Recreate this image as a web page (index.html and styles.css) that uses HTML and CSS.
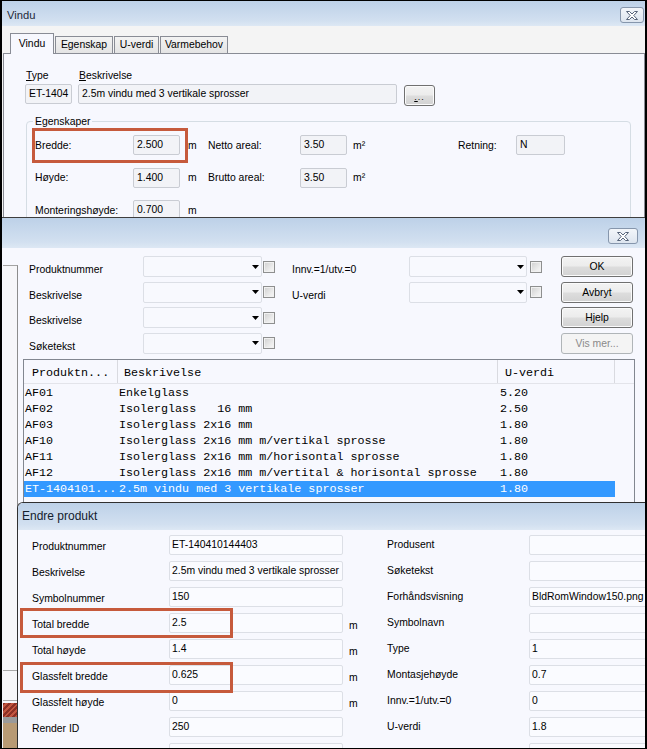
FILE: index.html
```html
<!DOCTYPE html>
<html lang="no">
<head>
<meta charset="utf-8">
<title>Vindu</title>
<link rel="stylesheet" href="styles.css">
</head>
<body>
<div class="screen">

  <section class="win win-vindu">
    <div class="titlebar tb1">
      <span class="title">Vindu</span>
      <span class="close close1"><svg width="12" height="9" viewBox="0 0 12 9"><polygon points="0.5,0.5 3.5,0.5 6,3 8.5,0.5 11.5,0.5 7.8,4.5 11.5,8.5 8.5,8.5 6,6 3.5,8.5 0.5,8.5 4.2,4.5" fill="#fff" stroke="#56647a" stroke-width="1"/></svg></span>
    </div>
    <div class="tabstrip">
      <span class="tab active w-vindu">Vindu</span>
      <span class="tab w-egen">Egenskap</span>
      <span class="tab w-uverdi">U-verdi</span>
      <span class="tab w-varme">Varmebehov</span>
    </div>
    <div class="tabpanel">
      <div class="typegrid">
        <span class="lbl"><u>T</u>ype</span>
        <span class="lbl"><u>B</u>eskrivelse</span>
        <span></span>
        <span class="field">ET-1404</span>
        <span class="field">2.5m vindu med 3 vertikale sprosser</span>
        <span class="btn btn-dots"><u>.</u>..</span>
      </div>
      <fieldset class="group">
        <legend>Egenskaper</legend>
        <div class="propgrid">
          <span>Bredde:</span><span class="field">2.500</span><span class="unit">m</span>
          <span>Netto areal:</span><span class="field">3.50</span><span class="unit2">m²</span>
          <span>Retning:</span><span class="field">N</span>

          <span>Høyde:</span><span class="field">1.400</span><span class="unit">m</span>
          <span>Brutto areal:</span><span class="field">3.50</span><span class="unit2">m²</span>
          <span></span><span></span>

          <span>Monteringshøyde:</span><span class="field">0.700</span><span class="unit">m</span>
        </div>
      </fieldset>
    </div>
  </section>

  <section class="win win-search">
    <div class="titlebar tb2">
      <span class="close close2"><svg width="12" height="9" viewBox="0 0 12 9"><polygon points="0.5,0.5 3.5,0.5 6,3 8.5,0.5 11.5,0.5 7.8,4.5 11.5,8.5 8.5,8.5 6,6 3.5,8.5 0.5,8.5 4.2,4.5" fill="#fff" stroke="#56647a" stroke-width="1"/></svg></span>
    </div>
    <div class="searchbody">
      <div class="searchgrid">
        <span class="slbl c1 r1">Produktnummer</span>
        <span class="combo c2 r1"><svg width="7" height="4" viewBox="0 0 7 4"><polygon points="0,0 7,0 3.5,4" fill="#000"/></svg></span>
        <span class="cb c3 r1"></span>
        <span class="slbl c5 r1">Innv.=1/utv.=0</span>
        <span class="combo c6 r1"><svg width="7" height="4" viewBox="0 0 7 4"><polygon points="0,0 7,0 3.5,4" fill="#000"/></svg></span>
        <span class="cb cb2 c7 r1"></span>
        <span class="btn c9 r1">OK</span>

        <span class="slbl c1 r2">Beskrivelse</span>
        <span class="combo c2 r2"><svg width="7" height="4" viewBox="0 0 7 4"><polygon points="0,0 7,0 3.5,4" fill="#000"/></svg></span>
        <span class="cb c3 r2"></span>
        <span class="slbl c5 r2">U-verdi</span>
        <span class="combo c6 r2"><svg width="7" height="4" viewBox="0 0 7 4"><polygon points="0,0 7,0 3.5,4" fill="#000"/></svg></span>
        <span class="cb cb2 c7 r2"></span>
        <span class="btn c9 r2">Avbryt</span>

        <span class="slbl c1 r3">Beskrivelse</span>
        <span class="combo c2 r3"><svg width="7" height="4" viewBox="0 0 7 4"><polygon points="0,0 7,0 3.5,4" fill="#000"/></svg></span>
        <span class="cb c3 r3"></span>
        <span class="btn c9 r3">Hjelp</span>

        <span class="slbl c1 r4">Søketekst</span>
        <span class="combo c2 r4"><svg width="7" height="4" viewBox="0 0 7 4"><polygon points="0,0 7,0 3.5,4" fill="#000"/></svg></span>
        <span class="cb c3 r4"></span>
        <span class="btn disabled c9 r4">Vis mer...</span>
      </div>

      <div class="list">
        <div class="lhead">
          <span class="h1">Produktn...</span>
          <span class="h2">Beskrivelse</span>
          <span class="h3">U-verdi</span>
        </div>
        <div class="lrows">
          <div class="lrow"><span>AF01</span><span>Enkelglass</span><span>5.20</span></div>
          <div class="lrow"><span>AF02</span><span>Isolerglass   16 mm</span><span>2.50</span></div>
          <div class="lrow"><span>AF03</span><span>Isolerglass 2x16 mm</span><span>1.80</span></div>
          <div class="lrow"><span>AF10</span><span>Isolerglass 2x16 mm m/vertikal sprosse</span><span>1.80</span></div>
          <div class="lrow"><span>AF11</span><span>Isolerglass 2x16 mm m/horisontal sprosse</span><span>1.80</span></div>
          <div class="lrow"><span>AF12</span><span>Isolerglass 2x16 mm m/vertital &amp; horisontal sprosse</span><span>1.80</span></div>
          <div class="lrow selected"><span>ET-1404101...</span><span>2.5m vindu med 3 vertikale sprosser</span><span>1.80</span></div>
        </div>
      </div>
    </div>
  </section>

  <div class="backdrop">
    <div class="bd-a"></div>
    <div class="bd-b"></div>
    <div class="bd-roof"></div>
    <div class="bd-gray"></div>
    <div class="bd-tan"></div>
  </div>

  <section class="win win-edit">
    <div class="titlebar tb3"><span class="title">Endre produkt</span></div>
    <div class="editgrid">
      <span class="elbl">Produktnummer</span><span class="efield">ET-140410144403</span><span></span>
      <span class="rlbl">Produsent</span><span class="efield"></span>

      <span class="elbl">Beskrivelse</span><span class="efield">2.5m vindu med 3 vertikale sprosser</span><span></span>
      <span class="rlbl">Søketekst</span><span class="efield"></span>

      <span class="elbl">Symbolnummer</span><span class="efield">150</span><span></span>
      <span class="rlbl">Forhåndsvisning</span><span class="efield">BldRomWindow150.png</span>

      <span class="elbl">Total bredde</span><span class="efield">2.5</span><span class="eunit">m</span>
      <span class="rlbl">Symbolnavn</span><span class="efield"></span>

      <span class="elbl">Total høyde</span><span class="efield">1.4</span><span class="eunit">m</span>
      <span class="rlbl">Type</span><span class="efield">1</span>

      <span class="elbl">Glassfelt bredde</span><span class="efield">0.625</span><span class="eunit">m</span>
      <span class="rlbl">Montasjehøyde</span><span class="efield">0.7</span>

      <span class="elbl">Glassfelt høyde</span><span class="efield">0</span><span class="eunit">m</span>
      <span class="rlbl">Innv.=1/utv.=0</span><span class="efield">0</span>

      <span class="elbl">Render ID</span><span class="efield">250</span><span></span>
      <span class="rlbl">U-verdi</span><span class="efield">1.8</span>

      <span></span><span class="efield"></span><span></span>
      <span></span><span class="efield"></span>
    </div>
  </section>

  <div class="mark mark1"></div>
  <div class="mark mark2"></div>
  <div class="mark mark3"></div>
</div>
</body>
</html>
```

FILE: styles.css
```css
* { box-sizing: border-box; }

html, body {
  margin: 0;
  padding: 0;
  background: #000;
}

body {
  font-family: "Liberation Sans", Arial, sans-serif;
  font-size: 10.4px;
  color: #000;
}

.screen {
  position: relative;
  width: 643px;
  height: 747px;
  margin: 1px 2px;
  overflow: hidden;
  background: #f4f5fa;
}

.win {
  position: absolute;
  overflow: hidden;
  background: #f7f8fe;
}

/* ---------- title bars ---------- */
.titlebar {
  display: flex;
  justify-content: space-between;
  align-items: flex-start;
  background: linear-gradient(#bdd1e8, #d2e0f0 80%, #dde8f4);
}

.title { white-space: nowrap; }

.close {
  display: flex;
  align-items: center;
  justify-content: center;
  border: 1px solid #8696ac;
  border-radius: 3px;
  background: linear-gradient(#f3f6fa, #dde5ef);
}

/* ---------- window 1 : Vindu ---------- */
.win-vindu {
  left: 0;
  top: 0;
  width: 643px;
  height: 230px;
  background: #f4f4f4;
}

.tb1 { height: 25px; }
.tb1 .title {
  font-size: 11.2px;
  line-height: 13px;
  padding: 8px 0 0 5px;
  color: #1e2a3a;
}
.close1 {
  width: 24px;
  height: 16px;
  margin: 6px 1px 0 0;
}

.tabstrip {
  height: 27px;
  display: flex;
  align-items: flex-end;
  padding-left: 8px;
  background: #f4f4f4;
}

.tab {
  height: 17px;
  margin-right: 1px;
  border: 1px solid #898c95;
  border-bottom: none;
  background: linear-gradient(#f3f3f3, #e4e4e4);
  text-align: center;
  line-height: 16px;
  white-space: nowrap;
}
.tab.active {
  position: relative;
  z-index: 1;
  height: 21px;
  margin-bottom: -1px;
  background: #f7f8fe;
  line-height: 20px;
}
.w-vindu { width: 44px; }
.w-egen { width: 58px; }
.w-uverdi { width: 45px; }
.w-varme { width: 68px; }

.tabpanel {
  margin-left: 1px;
  height: 200px;
  padding: 15px 0 0 21px;
  border: 1px solid #898c95;
  border-bottom: none;
  background: #f7f8fe;
}

.typegrid {
  display: grid;
  grid-template-columns: 47px 319px 32px;
  grid-template-rows: 13px 22px;
  column-gap: 6px;
  row-gap: 2px;
}
.typegrid .lbl {
  line-height: 13px;
  padding-left: 1px;
}

.field {
  align-self: start;
  height: 20px;
  padding-left: 3px;
  border: 1px solid #c9ccd3;
  border-radius: 2px;
  background: #f2f3f7;
  line-height: 18px;
  white-space: nowrap;
  overflow: hidden;
}

.btn {
  height: 21px;
  border: 1px solid #707070;
  border-radius: 3px;
  background: linear-gradient(#f3f3f3 0%, #ececec 48%, #dddddd 52%, #d2d2d2 100%);
  box-shadow: inset 0 0 0 1px #fbfbfb;
  text-align: center;
  line-height: 19px;
  white-space: nowrap;
}
.btn.disabled {
  border-color: #b0b5b8;
  background: #f4f4f4;
  box-shadow: none;
  color: #8a8a8a;
}
.btn-dots {
  align-self: start;
  margin: 1px 0 0 1px;
  line-height: 22px;
  font-size: 9px;
  letter-spacing: 1px;
}

.group {
  width: 605px;
  min-width: 0;
  margin: 9px 0 0 1px;
  padding: 7px 0 20px 8px;
  border: 1px solid #d5dde4;
  border-radius: 4px;
}
.group legend {
  padding: 0 2px;
  margin-left: -2px;
  line-height: 13px;
}

.propgrid {
  display: grid;
  grid-template-columns: 98px 47px 28px 92px 47px 111px 58px 49px;
  grid-template-rows: 20px 20px 20px;
  row-gap: 12.5px;
  align-items: center;
  white-space: nowrap;
}
.propgrid .field { align-self: center; }
.unit { padding-left: 8px; }
.unit2 { padding-left: 6px; }

/* ---------- window 2 : search ---------- */
.win-search {
  left: 0;
  top: 216px;
  width: 643px;
  height: 286px;
  border-top: 1px solid #3e3e3e;
  background: #f7f8fe;
}

.tb2 {
  height: 30px;
  justify-content: flex-end;
}
.close2 {
  width: 30px;
  height: 16px;
  margin: 10px 7px 0 0;
}

.searchbody { padding: 8px 0 0 21px; }

.searchgrid {
  display: grid;
  margin-left: 6px;
  grid-template-columns: 114px 119px 13px 17px 117px 118px 15px 19px 72px;
  grid-template-rows: repeat(4, 21px);
  row-gap: 4.5px;
  align-items: center;
}
.c1 { grid-column: 1; }
.c2 { grid-column: 2; }
.c3 { grid-column: 3; }
.c5 { grid-column: 5; }
.c6 { grid-column: 6; }
.c7 { grid-column: 7; }
.c9 { grid-column: 9; }
.r1 { grid-row: 1; }
.r2 { grid-row: 2; }
.r3 { grid-row: 3; }
.r4 { grid-row: 4; }

.slbl {
  align-self: end;
  line-height: 14px;
  white-space: nowrap;
}

.combo {
  height: 21px;
  display: flex;
  align-items: center;
  justify-content: flex-end;
  padding-right: 2px;
  border: 1px solid #dcdfe6;
  border-radius: 2px;
  background: #f8f9fe;
}

.cb {
  width: 12px;
  height: 12px;
  margin-left: 1px;
  border: 1px solid #8e8f8f;
  background: linear-gradient(135deg, #cfcfcf, #eeeeee 70%, #f6f6f6);
  box-shadow: inset 0 0 0 1px #f1f1f1;
}
.cb2 { margin-left: 3px; }

.list {
  width: 612px;
  height: 170px;
  margin-top: 5.5px;
  border: 1px solid #828790;
  background: #f7f8fe;
  font-family: "Liberation Mono", "Courier New", monospace;
  font-size: 11.7px;
  color: #000;
}

.lhead {
  display: grid;
  grid-template-columns: 94px 380px 117px;
  height: 24px;
  border-bottom: 1px solid #e3e4ea;
  white-space: nowrap;
}
.lhead span {
  padding-top: 3px;
  line-height: 20px;
  border-right: 1px solid #d9dae0;
  margin-bottom: 3px;
}
.h1 { padding-left: 8px; }
.h2 { padding-left: 6px; }
.h3 { padding-left: 7px; }

.lrows { padding-top: 1px; }

.lrow {
  display: grid;
  grid-template-columns: 94px 380px 117px;
  width: 591px;
  height: 16px;
  line-height: 16px;
  white-space: pre;
}
.lrow span:nth-child(1) { padding-left: 1px; }
.lrow span:nth-child(2) { padding-left: 1px; }
.lrow span:nth-child(3) { padding-left: 2px; }
.lrow.selected {
  background: #3399ff;
  color: #fff;
}

/* ---------- backdrop strip ---------- */
.backdrop {
  position: absolute;
  left: 1px;
  top: 264px;
  width: 15px;
  height: 483px;
  display: flex;
  flex-direction: column;
  border-top: 1px solid #a3a3a3;
  border-right: 1px solid #8c8c8c;
  background: #f6f6f9;
}
.bd-a { height: 405px; border-bottom: 1px solid #a8a8a8; }
.bd-b { height: 30px; border-bottom: 1px solid #a8a8a8; }
.bd-roof {
  height: 14px;
  margin-top: 2px;
  background: repeating-linear-gradient(135deg, #8c2f24 0 2px, #c2553f 2px 4px);
}
.bd-gray { height: 6px; background: #9a9a9a; }
.bd-tan { flex: 1; background: #b89a74; }

/* ---------- window 3 : Endre produkt ---------- */
.win-edit {
  left: 15px;
  top: 501px;
  width: 640px;
  height: 246px;
  border-left: 1px solid #303030;
  border-top: 1px solid #303030;
  border-top-left-radius: 6px;
  background: #f7f8fe;
}

.tb3 { height: 27px; }
.tb3 .title {
  font-size: 12px;
  line-height: 15px;
  padding: 6px 0 0 4px;
  color: #14202e;
}

.editgrid {
  display: grid;
  grid-template-columns: 137px 174px 44px 142px 200px;
  grid-auto-rows: 20px;
  row-gap: 6px;
  padding: 5px 0 0 14px;
  white-space: nowrap;
}

.elbl {
  align-self: end;
  line-height: 16px;
}
.rlbl {
  align-self: center;
  line-height: 20px;
}
.eunit {
  align-self: end;
  padding-left: 6px;
  line-height: 14px;
}
.efield {
  height: 20px;
  padding-left: 2px;
  border: 1px solid #dcdfe6;
  border-radius: 2px;
  background: #fafbff;
  line-height: 17px;
  overflow: hidden;
}

/* ---------- annotation boxes ---------- */
.mark {
  position: absolute;
  border: 3px solid #c65a3c;
}
.mark1 { left: 30px; top: 127px; width: 156px; height: 35px; }
.mark2 { left: 18px; top: 607px; width: 213px; height: 30px; }
.mark3 { left: 18px; top: 661px; width: 213px; height: 31px; }
```
